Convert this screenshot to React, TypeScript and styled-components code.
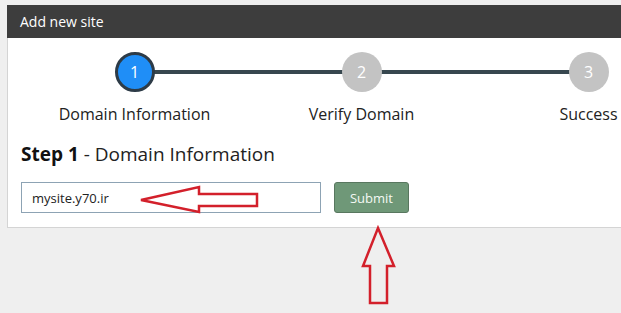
import React from "react";
import styled, { createGlobalStyle } from "styled-components";

const GlobalStyle = createGlobalStyle`
    html, body {
        margin: 0;
        padding: 0;
        background: #efefef;
        overflow: hidden;
        font-family: "Open Sans", "Noto Sans", sans-serif;
    }
`;

const Page = styled.div`
    position: relative;
    width: 621px;
    height: 313px;
    padding: 5px 0 0 7px;
    box-sizing: border-box;
    overflow: hidden;
`;

const Panel = styled.div`
    width: 740px;
    background: #fff;
    border: 1px solid #d4d4d4;
    border-top: none;
`;

const PanelHeader = styled.div`
    height: 33px;
    background: #3d3d3d;
    color: #fff;
    font-size: 14px;
    line-height: 33px;
    padding-left: 13px;
    margin-left: -1px;
`;

const PanelBody = styled.div`
    padding: 14px 0 14px 13px;
`;

const Steps = styled.div`
    display: flex;
`;

const Step = styled.div<{ $last?: boolean }>`
    position: relative;
    width: 227px;
    display: flex;
    flex-direction: column;
    align-items: center;

    &::after {
        content: "";
        display: ${(p) => (p.$last ? "none" : "block")};
        position: absolute;
        top: 18px;
        left: 50%;
        width: 100%;
        height: 4px;
        background: #37474f;
    }
`;

const Circle = styled.div<{ $active?: boolean }>`
    position: relative;
    z-index: 1;
    width: 40px;
    height: 40px;
    box-sizing: border-box;
    border-radius: 50%;
    background: ${(p) => (p.$active ? "#1f8ef7" : "#c3c3c3")};
    border: ${(p) => (p.$active ? "3px solid #2d3b47" : "none")};
    color: #fff;
    font-size: 16px;
    display: flex;
    align-items: center;
    justify-content: center;
`;

const StepLabel = styled.div`
    margin-top: 11px;
    font-size: 16px;
    line-height: 22px;
    color: #222;
    white-space: nowrap;
`;

const Heading = styled.h3`
    margin: 16px 0 14px;
    font-size: 19px;
    line-height: 27px;
    font-weight: 400;
    color: #222;

    b {
        font-weight: 700;
        color: #111;
    }
`;

const FormRow = styled.div`
    display: flex;
    gap: 13px;
`;

const DomainInput = styled.input`
    width: 300px;
    height: 31px;
    box-sizing: border-box;
    border: 1px solid #8da3b4;
    padding: 0 10px;
    font-family: "Open Sans", sans-serif;
    font-size: 13px;
    color: #222;
    outline: none;
`;

const SubmitButton = styled.button`
    width: 75px;
    height: 31px;
    border: 1px solid #58775f;
    border-radius: 3px;
    background: #6f9878;
    color: #f4f8f4;
    font-family: "Open Sans", sans-serif;
    font-size: 13px;
    padding: 0;
`;

const Annotations = styled.svg`
    position: absolute;
    left: 0;
    top: 0;
    pointer-events: none;
`;

export default function App() {
    return (
        <Page>
            <GlobalStyle />
            <Panel>
                <PanelHeader>Add new site</PanelHeader>
                <PanelBody>
                    <Steps>
                        <Step>
                            <Circle $active>1</Circle>
                            <StepLabel>Domain Information</StepLabel>
                        </Step>
                        <Step>
                            <Circle>2</Circle>
                            <StepLabel>Verify Domain</StepLabel>
                        </Step>
                        <Step $last>
                            <Circle>3</Circle>
                            <StepLabel>Success</StepLabel>
                        </Step>
                    </Steps>
                    <Heading>
                        <b>Step 1</b> - Domain Information
                    </Heading>
                    <FormRow>
                        <DomainInput defaultValue="mysite.y70.ir" />
                        <SubmitButton type="button">Submit</SubmitButton>
                    </FormRow>
                </PanelBody>
            </Panel>
            {/* red hand-drawn pointers over the form */}
            <Annotations width="621" height="313">
                <polygon
                    points="141,200 199,187 199,194 257,194 257,206 199,206 199,212"
                    fill="none"
                    stroke="#d3202b"
                    strokeWidth="2.5"
                />
                <polygon
                    points="378,228 394,266 387,266 387,303 370,303 370,266 363,266"
                    fill="none"
                    stroke="#d3202b"
                    strokeWidth="2.5"
                />
            </Annotations>
        </Page>
    );
}
